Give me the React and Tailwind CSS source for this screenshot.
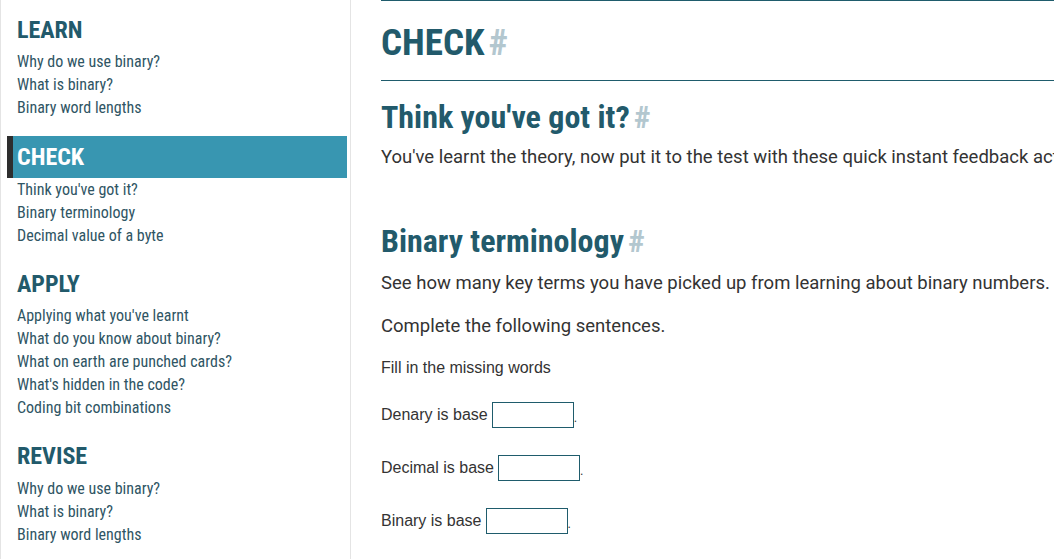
import React from 'react'

const cond = { fontFamily: '"Roboto Condensed", "Liberation Sans Narrow", "DejaVu Sans Condensed", Roboto, sans-serif' }
const roboto = { fontFamily: 'Roboto, sans-serif' }
const arial = { fontFamily: '"Liberation Sans", Arial, sans-serif' }

const sections = [
  { title: 'LEARN', links: ['Why do we use binary?', 'What is binary?', 'Binary word lengths'] },
  { title: 'CHECK', active: true, links: ['Think you\'ve got it?', 'Binary terminology', 'Decimal value of a byte'] },
  {
    title: 'APPLY',
    links: [
      'Applying what you\'ve learnt',
      'What do you know about binary?',
      'What on earth are punched cards?',
      'What\'s hidden in the code?',
      'Coding bit combinations',
    ],
  },
  { title: 'REVISE', links: ['Why do we use binary?', 'What is binary?', 'Binary word lengths'] },
]

const Hash = () => <span className="ml-1 text-[#b3c7cf] font-bold">#</span>

const Blank = ({ label }) => (
  <div className="flex items-center h-[53px] text-[16px] text-[#333]" style={arial}>
    <span>{label}</span>
    <input className="ml-1 w-[82px] h-[26px] border border-[#1f5c6c] bg-white outline-none" />
    <span className="self-end mb-[17px] text-[12px] leading-none">.</span>
  </div>
)

const App = () => {
  return (
    <div className="w-[1054px] h-[559px] overflow-hidden bg-white flex">
      {/* Sidebar */}
      <aside className="w-[351px] shrink-0 h-full border-l border-r border-[#e4e4e4] pt-[9px] flex flex-col gap-[16.5px]" style={cond}>
        {sections.map((s) => (
          <div key={s.title}>
            <div
              className={
                s.active
                  ? 'ml-[6px] mr-[3px] h-[42px] flex items-center pl-[4px] bg-[#3896b1] border-l-[6px] border-[#2e2e2e] text-white text-[24px] font-bold'
                  : 'ml-[6px] mr-[3px] h-[41px] flex items-center pl-[10px] text-[#225a6b] text-[24px] font-bold'
              }
            >
              {s.title}
            </div>
            <ul className="pl-[16px]">
              {s.links.map((l) => (
                <li key={l} className="text-[16px] leading-[23px] text-[#2f5564]">
                  {l}
                </li>
              ))}
            </ul>
          </div>
        ))}
      </aside>

      {/* Main */}
      <main className="flex-1 pl-[30px] whitespace-nowrap text-[#333]">
        <div className="h-[81px] border-t border-b border-[#1f5c6c] flex items-center pt-[3px]">
          <h1 className="text-[37px] font-bold text-[#225a6b] leading-none" style={cond}>
            CHECK
            <Hash />
          </h1>
        </div>

        <h2 className="mt-[19px] text-[32px] font-bold text-[#225a6b] leading-[34px]" style={cond}>
          Think you've got it?
          <Hash />
        </h2>
        <p className="mt-[9px] text-[18.5px] leading-[28px]" style={roboto}>
          You've learnt the theory, now put it to the test with these quick instant feedback activities.
        </p>

        <h2 className="mt-[53px] text-[32px] font-bold text-[#225a6b] leading-[34px]" style={cond}>
          Binary terminology
          <Hash />
        </h2>
        <p className="mt-[11px] text-[18.5px] leading-[28px]" style={roboto}>
          See how many key terms you have picked up from learning about binary numbers.
        </p>
        <p className="mt-[15px] text-[18.5px] leading-[28px]" style={roboto}>
          Complete the following sentences.
        </p>

        <p className="mt-[18px] text-[16px] leading-[20px]" style={arial}>
          Fill in the missing words
        </p>
        <div className="mt-[10px]">
          <Blank label="Denary is base" />
          <Blank label="Decimal is base" />
          <Blank label="Binary is base" />
        </div>
      </main>
    </div>
  )
}

export default App
